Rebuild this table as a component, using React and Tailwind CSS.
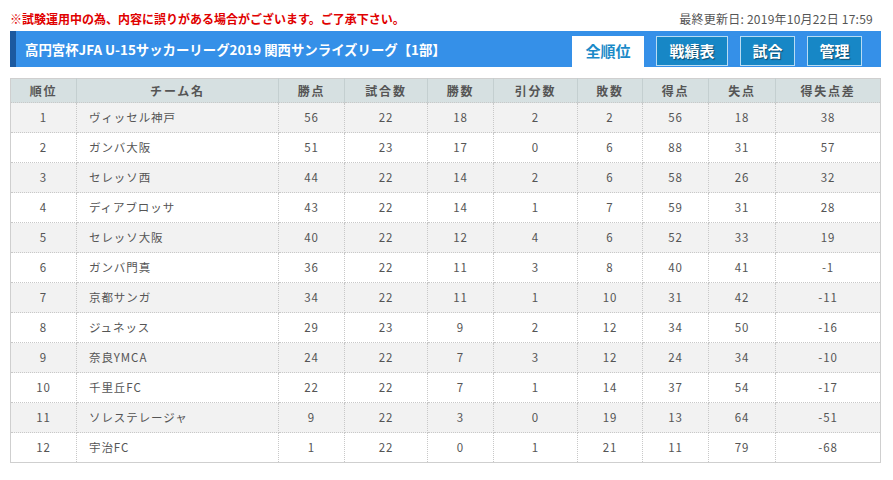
import React from "react";

const rows = [
  [1, "ヴィッセル神戸", 56, 22, 18, 2, 2, 56, 18, 38],
  [2, "ガンバ大阪", 51, 23, 17, 0, 6, 88, 31, 57],
  [3, "セレッソ西", 44, 22, 14, 2, 6, 58, 26, 32],
  [4, "ディアブロッサ", 43, 22, 14, 1, 7, 59, 31, 28],
  [5, "セレッソ大阪", 40, 22, 12, 4, 6, 52, 33, 19],
  [6, "ガンバ門真", 36, 22, 11, 3, 8, 40, 41, -1],
  [7, "京都サンガ", 34, 22, 11, 1, 10, 31, 42, -11],
  [8, "ジュネッス", 29, 23, 9, 2, 12, 34, 50, -16],
  [9, "奈良YMCA", 24, 22, 7, 3, 12, 24, 34, -10],
  [10, "千里丘FC", 22, 22, 7, 1, 14, 37, 54, -17],
  [11, "ソレステレージャ", 9, 22, 3, 0, 19, 13, 64, -51],
  [12, "宇治FC", 1, 22, 0, 1, 21, 11, 79, -68],
];

const heads = ["順位", "チーム名", "勝点", "試合数", "勝数", "引分数", "敗数", "得点", "失点", "得失点差"];
const widths = ["w-[66px]", "w-[202px]", "w-[66px]", "w-[83px]", "w-[66px]", "w-[84px]", "w-[65px]", "w-[66px]", "w-[67px]", "w-[105px]"];

const tabCls =
  "h-[30px] mt-[5px] bg-[#1787c6] border border-[#b9dcf3] text-white text-[15px] font-bold flex items-center justify-center [text-shadow:1px_1px_1px_rgba(0,0,0,0.45)]";

export default function App() {
  return (
    <div className="w-[893px] h-[480px] bg-white overflow-hidden font-['Noto_Sans_CJK_JP',sans-serif] text-[#555]">
      <div className="flex justify-between items-end h-[26px] px-[10px] pr-[20px] pb-[1px]">
        <span className="text-[12px] font-bold text-[#e00000] leading-none">※試験運用中の為、内容に誤りがある場合がございます。ご了承下さい。</span>
        <span className="text-[12px] text-[#555] tracking-[0.02em] leading-none">最終更新日: 2019年10月22日 17:59</span>
      </div>

      <div className="mx-[10px] mt-[5px] w-[871px] h-[36px] bg-[#3590e8] flex border-l-[6px] border-[#1c5aa0]">
        <div className="flex-1 flex items-center pl-[9px] text-white text-[13.4px] font-bold whitespace-nowrap">
          高円宮杯JFA U-15サッカーリーグ2019 関西サンライズリーグ【1部】
        </div>
        <div className="flex gap-[12px] pr-[19px]">
          <div className="w-[72px] h-[31px] mt-[5px] bg-white text-[#1a8ac8] text-[15px] font-bold flex items-center justify-center">全順位</div>
          <div className={`w-[72px] ${tabCls}`}>戦績表</div>
          <div className={`w-[55px] ${tabCls}`}>試合</div>
          <div className={`w-[55px] ${tabCls}`}>管理</div>
        </div>
      </div>

      <table className="mx-[10px] mt-[11px] w-[871px] border-collapse border border-[#cfcfcf] table-fixed text-[12px]">
        <thead>
          <tr className="h-[24px] bg-[#d6e0e1]">
            {heads.map((h, i) => (
              <th key={h} className={`${widths[i]} font-bold text-[#555] tracking-[0.15em] border-l border-[#c4cfd0] first:border-l-0 p-0`}>
                {h}
              </th>
            ))}
          </tr>
        </thead>
        <tbody>
          {rows.map((r, ri) => (
            <tr key={r[0]} className={`h-[30px] ${ri % 2 === 0 ? "bg-[#f2f2f2]" : "bg-white"}`}>
              {r.map((c, ci) => (
                <td
                  key={ci}
                  className={`border border-dotted border-[#c8c8c8] p-0 text-[11.5px] tracking-[0.08em] ${ci === 1 ? "text-left pl-[12px]" : "text-center"}`}
                >
                  {c}
                </td>
              ))}
            </tr>
          ))}
        </tbody>
      </table>
    </div>
  );
}
